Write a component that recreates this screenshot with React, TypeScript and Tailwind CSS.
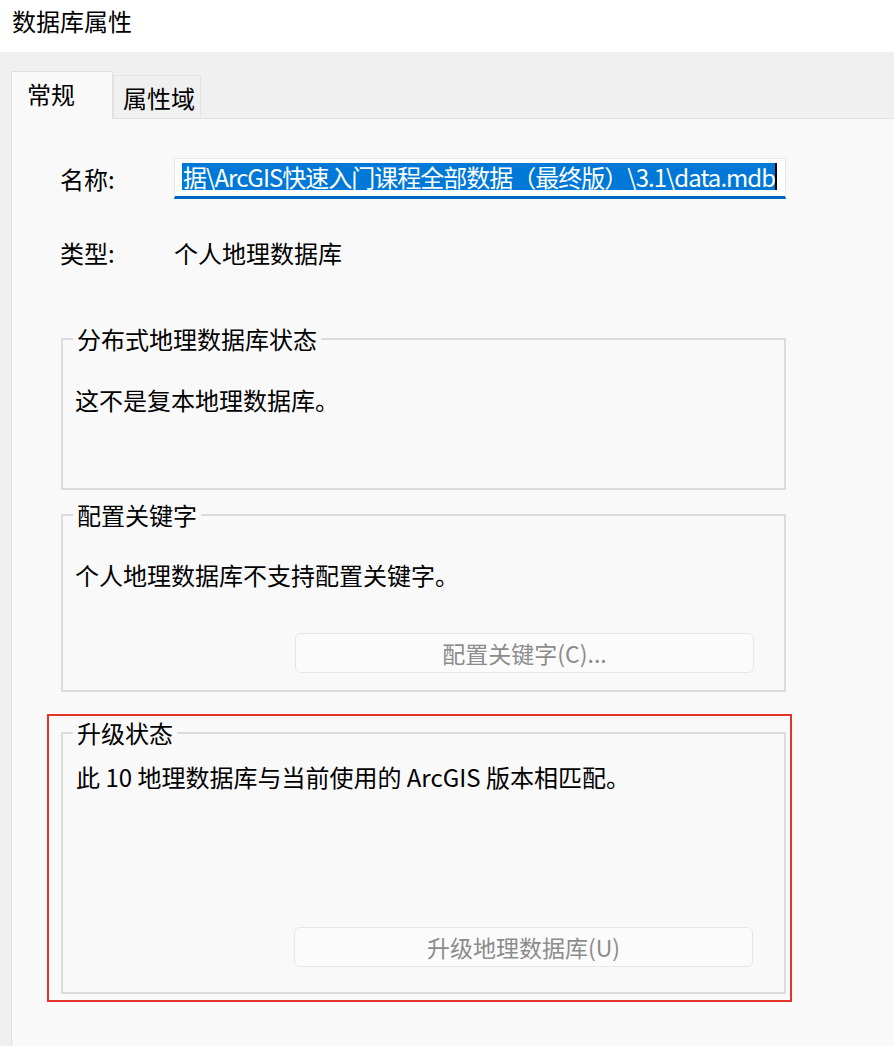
import React from "react";

function Group({
  title,
  className,
  children,
}: {
  title: string;
  className: string;
  children: React.ReactNode;
}) {
  return (
    <fieldset className={`w-[725px] border-2 border-[#dcdcdc] ${className}`}>
      <legend className="ml-[10px] px-[4px] text-[24px] leading-[28px] text-black">
        {title}
      </legend>
      {children}
    </fieldset>
  );
}

function DisabledButton({ label, className }: { label: string; className: string }) {
  return (
    <div
      className={`flex h-[40px] w-[459px] items-center justify-center rounded-[6px] border border-[#e6e6e6] bg-[#fbfbfb] text-[23px] leading-[28px] text-[#8c8c8c] ${className}`}
    >
      {label}
    </div>
  );
}

export default function App() {
  return (
    <div className="flex h-[1046px] w-[894px] flex-col overflow-hidden bg-[#f0f0f0] font-['Noto_Sans_CJK_SC','Microsoft_YaHei',sans-serif] text-black">
      {/* Title bar */}
      <div className="h-[52px] shrink-0 bg-white pl-[12px] pt-[7px] text-[24px] leading-[28px]">
        数据库属性
      </div>

      {/* Tabs */}
      <div className="mt-[19px] ml-[11px] flex shrink-0 items-end">
        <div className="relative z-10 -mb-px h-[48px] w-[102px] border border-b-0 border-[#e0e0e0] bg-[#f9f9f9] pl-[15px] pt-[8px] text-[24px] leading-[28px]">
          常规
        </div>
        <div className="h-[43px] w-[88px] border border-b-0 border-[#e3e3e3] bg-[#f0f0f0] pl-[9px] pt-[8px] text-[24px] leading-[28px]">
          属性域
        </div>
      </div>

      {/* Panel */}
      <div className="ml-[11px] flex-1 border-l border-t border-[#e0e0e0] bg-[#f9f9f9] pl-[48px] pt-[39px]">
        {/* Name row */}
        <div className="flex items-center">
          <div className="w-[114px] text-[24px] leading-[28px]">名称:</div>
          <div className="flex h-[41px] w-[612px] items-start justify-end overflow-hidden border border-b-[3px] border-[#e6e6e6] border-b-[#0067c0] bg-white pr-[8px] pt-[4px]">
            <span className="whitespace-nowrap bg-[#0078d7] pl-px text-[24px] leading-[27px] tracking-[-1px] text-white">
              据\ArcGIS快速入门课程全部数据（最终版）\3.1\data.mdb
            </span>
            <span className="h-[27px] w-[2px] shrink-0 bg-black" />
          </div>
        </div>

        {/* Type row */}
        <div className="mt-[40px] flex items-center">
          <div className="w-[114px] text-[24px] leading-[28px]">类型:</div>
          <div className="text-[24px] leading-[28px]">个人地理数据库</div>
        </div>

        <div className="ml-px">
          <Group title="分布式地理数据库状态" className="mt-[58px] h-[165px]">
            <div className="mt-[33px] pl-[12px] text-[24px] leading-[28px]">
              这不是复本地理数据库。
            </div>
          </Group>

          <Group title="配置关键字" className="mt-[11px] h-[191px]">
            <div className="mt-[32px] pl-[12px] text-[24px] leading-[28px]">
              个人地理数据库不支持配置关键字。
            </div>
            <div className="mt-[44px] flex justify-end pr-[30px]">
              <DisabledButton label="配置关键字(C)..." className="" />
            </div>
          </Group>

          <div className="relative mt-[27px] w-[725px]">
            <Group title="升级状态" className="h-[275px]">
              <div className="mt-[16px] pl-[13px] text-[24px] leading-[28px]">
                此 10 地理数据库与当前使用的 ArcGIS 版本相匹配。
              </div>
              <div className="mt-[136px] flex justify-end pr-[31px]">
                <DisabledButton label="升级地理数据库(U)" className="w-[457px]" />
              </div>
            </Group>
            <div className="pointer-events-none absolute -top-[5px] -left-[14px] -right-[6px] -bottom-[8px] border-2 border-[#e3352b]" />
          </div>
        </div>
      </div>
    </div>
  );
}
